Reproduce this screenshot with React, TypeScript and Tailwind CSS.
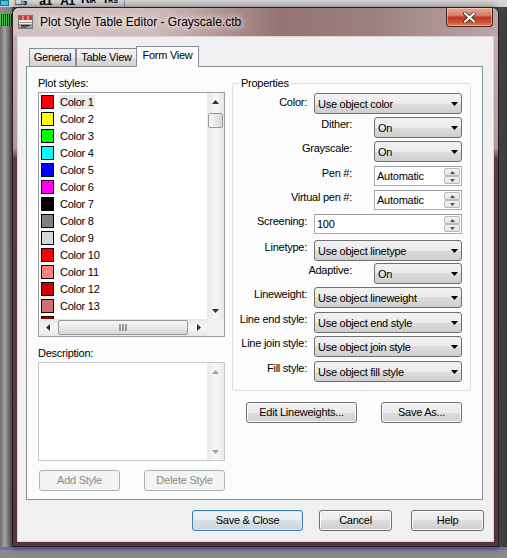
import type { ReactNode } from 'react'

const FONT = "font-['Liberation_Sans',Arial,sans-serif]"

const swatches = [
  '#ff0000', '#ffff00', '#00ff00', '#00ffff', '#0000ff', '#ff00ff', '#000000',
  '#808080', '#d6d6d6', '#ff0000', '#ff7f7f', '#cc0000', '#d86b6b', '#990000',
]

type Row = { label: string; kind: 'combo' | 'spin'; value: string; wide: boolean; mt: string }

const rows: Row[] = [
  { label: 'Color:', kind: 'combo', value: 'Use object color', wide: true, mt: 'mt-[3px]' },
  { label: 'Dither:', kind: 'combo', value: 'On', wide: false, mt: 'mt-[3px]' },
  { label: 'Grayscale:', kind: 'combo', value: 'On', wide: false, mt: 'mt-[3px]' },
  { label: 'Pen #:', kind: 'spin', value: 'Automatic', wide: false, mt: 'mt-[4px]' },
  { label: 'Virtual pen #:', kind: 'spin', value: 'Automatic', wide: false, mt: 'mt-[3px]' },
  { label: 'Screening:', kind: 'spin', value: '100', wide: true, mt: 'mt-[3px]' },
  { label: 'Linetype:', kind: 'combo', value: 'Use object linetype', wide: true, mt: 'mt-[5px]' },
  { label: 'Adaptive:', kind: 'combo', value: 'On', wide: false, mt: 'mt-[2px]' },
  { label: 'Lineweight:', kind: 'combo', value: 'Use object lineweight', wide: true, mt: 'mt-[3px]' },
  { label: 'Line end style:', kind: 'combo', value: 'Use object end style', wide: true, mt: 'mt-[4px]' },
  { label: 'Line join style:', kind: 'combo', value: 'Use object join style', wide: true, mt: 'mt-[3px]' },
  { label: 'Fill style:', kind: 'combo', value: 'Use object fill style', wide: true, mt: 'mt-[4px]' },
]

function Arrow({ dir, color = '#000' }: { dir: 'up' | 'down' | 'left' | 'right'; color?: string }) {
  if (dir === 'left' || dir === 'right') {
    return (
      <svg width="4" height="7" viewBox="0 0 4 7">
        <path d={dir === 'left' ? 'M4 0V7L0 3.5Z' : 'M0 0V7L4 3.5Z'} fill={color} />
      </svg>
    )
  }
  return (
    <svg width="7" height="4" viewBox="0 0 7 4">
      <path d={dir === 'down' ? 'M0 0H7L3.5 4Z' : 'M0 4H7L3.5 0Z'} fill={color} />
    </svg>
  )
}

function Btn({ children, w, primary, disabled }: { children: ReactNode; w: string; primary?: boolean; disabled?: boolean }) {
  const look = disabled
    ? 'border-[#adb2b5] bg-[#f4f4f4] text-[#8a8a8a]'
    : primary
      ? 'border-[#3c7fb1] bg-[linear-gradient(#eef4f8,#e6edf2_50%,#d8e1e8_50%,#ccd6de)] shadow-[inset_0_0_0_1px_#cfe9f8]'
      : 'border-[#707070] bg-[linear-gradient(#f2f2f2,#ebebeb_50%,#dddddd_50%,#cfcfcf)] shadow-[inset_0_0_0_1px_#fbfbfb]'
  return (
    <button type="button" className={`flex h-[21px] items-center justify-center rounded-[3px] border leading-[13px] ${look} ${w}`}>
      {children}
    </button>
  )
}

function Combo({ value, w }: { value: string; w: string }) {
  return (
    <div className={`flex h-[21px] items-center justify-between rounded-[3px] border border-[#707070] bg-[linear-gradient(#f2f2f2,#ebebeb_50%,#dddddd_50%,#cfcfcf)] pl-[3px] pr-[3px] ${w}`}>
      <span className="pt-[1px] leading-[13px]">{value}</span>
      <Arrow dir="down" />
    </div>
  )
}

function SpinHalf({ dir }: { dir: 'up' | 'down' }) {
  return (
    <div className="flex flex-1 items-center justify-center rounded-[2px] border border-[#b9b9b9] bg-[linear-gradient(#f6f6f6,#e2e2e2)]">
      <svg width="5" height="3" viewBox="0 0 5 3">
        <path d={dir === 'down' ? 'M0 0H5L2.5 3Z' : 'M0 3H5L2.5 0Z'} fill="#4a5466" />
      </svg>
    </div>
  )
}

function Spin({ value, w }: { value: string; w: string }) {
  return (
    <div className={`flex h-[20px] items-center border border-[#abadb3] border-t-[#9a9ca3] bg-white pl-[2px] ${w}`}>
      <span className="flex-1 leading-[13px]">{value}</span>
      <div className="mr-[1px] flex h-full w-[16px] flex-col py-[1px]">
        <SpinHalf dir="up" />
        <SpinHalf dir="down" />
      </div>
    </div>
  )
}

function PlotList() {
  return (
    <div className="flex h-[245px] flex-col border border-[#9a9da3] bg-white">
      <div className="flex h-[226px]">
        <div className="flex-1 overflow-hidden">
          {swatches.map((c, i) => (
            <div key={i} className="flex h-[17px] items-center pl-[2px]">
              <span className="h-[14px] w-[13px] border border-black" style={{ backgroundColor: c }} />
              <span className={`ml-[5px] px-[1px] leading-[14px] ${i === 0 ? 'bg-[#ebebeb]' : ''}`}>Color {i + 1}</span>
            </div>
          ))}
        </div>
        <div className="flex w-[17px] flex-col bg-[linear-gradient(90deg,#e6e6e6,#f4f4f4_40%,#f4f4f4_60%,#e6e6e6)]">
          <div className="flex h-[17px] items-center justify-center">
            <Arrow dir="up" color="#303030" />
          </div>
          <div className="mx-[1px] mt-[3px] h-[15px] rounded-[2px] border border-[#989898] bg-[linear-gradient(90deg,#f7f7f7,#e8e8e8_50%,#d9d9d9)]" />
          <div className="flex-1" />
          <div className="flex h-[17px] items-center justify-center">
            <Arrow dir="down" color="#303030" />
          </div>
        </div>
      </div>
      <div className="flex h-[17px]">
        <div className="flex flex-1 items-center bg-[linear-gradient(#e6e6e6,#f4f4f4_40%,#f4f4f4_60%,#e6e6e6)]">
          <div className="flex h-[17px] w-[17px] items-center justify-center">
            <Arrow dir="left" color="#303030" />
          </div>
          <div className="ml-[2px] flex h-[15px] w-[130px] items-center justify-center rounded-[2px] border border-[#989898] bg-[linear-gradient(#f7f7f7,#e8e8e8_50%,#d6d6d6)]">
            <svg width="9" height="7" viewBox="0 0 9 7">
              <path d="M1 0V7M4 0V7M7 0V7" stroke="#4a4a4a" strokeWidth="1" />
            </svg>
          </div>
          <div className="flex-1" />
          <div className="flex h-[17px] w-[17px] items-center justify-center">
            <Arrow dir="right" color="#303030" />
          </div>
        </div>
        <div className="w-[17px] bg-[#f0f0f0]" />
      </div>
    </div>
  )
}

function Description() {
  return (
    <div className="flex h-[99px] border border-[#c4c6cb] bg-white">
      <div className="flex-1" />
      <div className="flex w-[17px] flex-col bg-[linear-gradient(90deg,#e9e9e9,#f5f5f5_40%,#f5f5f5_60%,#e9e9e9)]">
        <div className="flex h-[17px] items-center justify-center">
          <Arrow dir="up" color="#a3a3a3" />
        </div>
        <div className="flex-1" />
        <div className="flex h-[17px] items-center justify-center">
          <Arrow dir="down" color="#a3a3a3" />
        </div>
      </div>
    </div>
  )
}

function Properties() {
  return (
    <fieldset className="w-[239px] rounded-[3px] border border-[#d5dfe5] pb-[8px]">
      <legend className="ml-[6px] px-[2px] leading-[13px]">Properties</legend>
      <div className="flex flex-col">
        {rows.map((r, i) => (
          <div key={r.label} className={`flex h-[21px] items-start ${r.mt}`}>
            <span className={`text-right leading-[13px] ${i === 0 ? 'pt-[3px]' : 'pt-[1px]'} ${r.wide ? 'w-[74px]' : 'w-[119px]'}`}>
              {r.label}
            </span>
            <div className={r.wide ? 'ml-[7px]' : 'ml-[22px]'}>
              {r.kind === 'combo' ? (
                <Combo value={r.value} w={r.wide ? 'w-[148px]' : 'w-[88px]'} />
              ) : (
                <Spin value={r.value} w={r.wide ? 'w-[148px]' : 'w-[88px]'} />
              )}
            </div>
          </div>
        ))}
      </div>
    </fieldset>
  )
}

function TitleIcon() {
  return (
    <svg width="15" height="14" viewBox="0 0 15 14">
      <rect x="0.5" y="0.5" width="14" height="13" fill="#ececec" stroke="#7a7a7a" />
      <rect x="1" y="1" width="13" height="4" fill="#d23a3a" />
      <path d="M5 1V5M10 1V5" stroke="#f4d0d0" />
      <path d="M1 7.5H14" stroke="#9a9a9a" />
      <rect x="1" y="9" width="13" height="4" fill="#9c9c9c" />
      <path d="M3 10.5H12M3 12H9" stroke="#2a2a2a" />
    </svg>
  )
}

function CloseButton() {
  return (
    <div className="ml-auto mr-[5px] flex h-[19px] w-[47px] items-center justify-center self-start rounded-b-[4px] border border-t-0 border-[#4e2118] bg-[linear-gradient(#e9a692,#d7806b_40%,#c2391d_52%,#cf5434_80%,#e4876a)] shadow-[inset_0_0_0_1px_rgba(255,220,210,0.45)]">
      <svg width="13" height="11" viewBox="0 0 13 11">
        <path d="M2 1.5L11 9.5M11 1.5L2 9.5" stroke="#3a2a2a" strokeWidth="3.6" strokeLinecap="square" />
        <path d="M2 1.5L11 9.5M11 1.5L2 9.5" stroke="#ffffff" strokeWidth="2" strokeLinecap="square" />
      </svg>
    </div>
  )
}

function Desktop() {
  return (
    <div className="flex h-full flex-col">
      <div className="flex h-[7px] items-end overflow-hidden bg-[#d8d8d8] text-[12px] font-bold text-black">
        <span className="mb-[1px] h-[6px] w-[9px] border border-[#1c6f8a] bg-[#3cc7ea]" />
        <span className="ml-[6px] leading-[12px]">□₃</span>
        <span className="ml-[12px] leading-[12px]">a1</span>
        <span className="ml-[8px] leading-[12px]">A1</span>
        <span className="ml-[6px] leading-[12px]">R<span className="text-[7px]">IR</span></span>
        <span className="ml-[8px] leading-[12px]">r<span className="text-[7px]">RS</span></span>
        <span className="ml-[6px] h-[7px] w-px bg-[#9a9a9a]" />
      </div>
      <div className="flex flex-1">
        <div className="flex w-[12px] flex-col">
          <div className="h-[7px] bg-[#8c8c8c]" />
          <div className="h-[12px] bg-[repeating-linear-gradient(90deg,#46c746_0_1px,#0d3a0d_1px_2px)]" />
          <div className="flex-1 bg-[linear-gradient(90deg,#6a6a6a,#a8a8a8_40%,#5a5a5a)]" />
        </div>
        <div className="flex-1 bg-[#4a4a4a]" />
        <div className="w-[8px] bg-[linear-gradient(90deg,#555,#3a3a3a)]" />
      </div>
      <div className="h-[11px] border-t-[3px] border-[#6d6dc9] bg-[#8b8b8f]" />
    </div>
  )
}

export default function App() {
  return (
    <div className={`relative h-[558px] w-[507px] overflow-hidden text-[11px] tracking-[-0.25px] text-black ${FONT}`}>
      <Desktop />
      <div className="absolute left-[12px] top-[7px] flex h-[540px] w-[487px] flex-col rounded-t-[7px] border border-[#2a1b1c] bg-[linear-gradient(#c9b4b5_0%,#b19899_26%,#5c3d3f_28%,#55373a_100%)] shadow-[0_0_8px_rgba(0,0,0,0.55)]">
        <div className="flex h-[28px] items-center rounded-t-[6px] bg-[linear-gradient(90deg,#d4c2c3_0%,#cdb9ba_30%,#947374_55%,#9d8182_75%,#bba6a7_100%)]">
          <div className="ml-[5px]">
            <TitleIcon />
          </div>
          <span className="ml-[7px] text-[12px] tracking-normal [text-shadow:0_0_6px_#fff,0_0_10px_#fff]">
            Plot Style Table Editor - Grayscale.ctb
          </span>
          <CloseButton />
        </div>
        <div className="flex flex-1 flex-col px-[4px] pb-[4px]">
          <div className="flex flex-1 flex-col border border-[#ddd3d3] bg-[#f0f0f0]">
            <div className="mt-[9px] flex h-[20px] items-end pl-[11px]">
              <div className="flex h-[18px] w-[47px] items-center justify-center border border-b-0 border-[#898c95] bg-[linear-gradient(#f3f3f3,#ebebeb_50%,#dedede_50%,#d4d4d4)]">
                General
              </div>
              <div className="flex h-[18px] w-[61px] items-center justify-center border border-b-0 border-[#898c95] bg-[linear-gradient(#f3f3f3,#ebebeb_50%,#dedede_50%,#d4d4d4)]">
                Table View
              </div>
              <div className="relative z-10 -mb-px -ml-px flex h-[21px] w-[63px] items-center justify-center border border-b-0 border-[#898c95] bg-[#fcfcfc] pb-[3px]">
                Form View
              </div>
            </div>
            <div className="ml-[8px] flex h-[434px] w-[457px] border border-[#898c95] bg-[#fcfcfc] pl-[11px] pt-[10px]">
              <div className="flex w-[187px] flex-col">
                <span className="h-[13px] leading-[13px]">Plot styles:</span>
                <div className="mt-[2px]">
                  <PlotList />
                </div>
                <span className="mt-[10px] h-[13px] leading-[13px]">Description:</span>
                <div className="mt-[2px]">
                  <Description />
                </div>
                <div className="mt-[9px] flex justify-between pl-[1px]">
                  <Btn w="w-[81px]" disabled>Add Style</Btn>
                  <Btn w="w-[81px]" disabled>Delete Style</Btn>
                </div>
              </div>
              <div className="ml-[7px] flex flex-col">
                <Properties />
                <div className="mt-[11px] flex pl-[14px]">
                  <Btn w="w-[111px]">Edit Lineweights...</Btn>
                  <div className="ml-[24px]">
                    <Btn w="w-[81px]">Save As...</Btn>
                  </div>
                </div>
              </div>
            </div>
            <div className="mt-[10px] flex justify-end pr-[9px]">
              <Btn w="w-[111px]" primary>Save &amp; Close</Btn>
              <div className="ml-[16px]">
                <Btn w="w-[73px]">Cancel</Btn>
              </div>
              <div className="ml-[19px]">
                <Btn w="w-[73px]">Help</Btn>
              </div>
            </div>
          </div>
        </div>
      </div>
    </div>
  )
}
